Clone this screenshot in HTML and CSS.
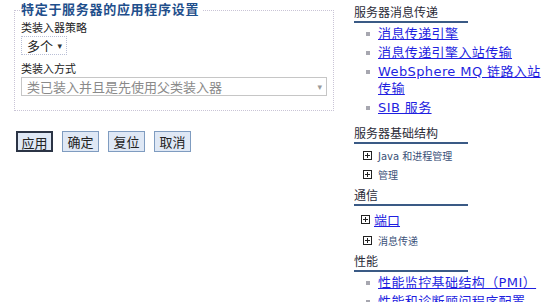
FILE: index.html
```html
<!DOCTYPE html>
<html lang="zh-CN">
<head>
    <meta charset="UTF-8">
    <title>应用程序服务器设置</title>
    <link rel="stylesheet" href="styles.css">
</head>
<body>
    <div class="page">
        <div class="main">
            <fieldset class="settings">
                <legend>特定于服务器的应用程序设置</legend>

                <div class="field-label">类装入器策略</div>
                <div class="select short">
                    <span>多个</span>
                    <span class="arrow">&#9662;</span>
                </div>

                <div class="field-label second">类装入方式</div>
                <div class="select wide disabled">
                    <span>类已装入并且是先使用父类装入器</span>
                    <span class="arrow">&#9662;</span>
                </div>
            </fieldset>

            <div class="buttons">
                <button class="btn default">应用</button>
                <button class="btn">确定</button>
                <button class="btn">复位</button>
                <button class="btn">取消</button>
            </div>
        </div>

        <div class="side">
            <div class="side-section">
                <div class="side-title">服务器消息传递</div>
                <ul class="link-list">
                    <li><a href="#">消息传递引擎</a></li>
                    <li><a href="#">消息传递引擎入站传输</a></li>
                    <li><a href="#">WebSphere MQ 链路入站传输</a></li>
                    <li><a href="#">SIB 服务</a></li>
                </ul>
            </div>

            <div class="side-section">
                <div class="side-title">服务器基础结构</div>
                <ul class="tree-list">
                    <li><span class="plus"></span><span class="tree-text">Java 和进程管理</span></li>
                    <li><span class="plus"></span><span class="tree-text">管理</span></li>
                </ul>
            </div>

            <div class="side-section">
                <div class="side-title">通信</div>
                <ul class="tree-list">
                    <li class="tree-link"><span class="plus"></span><a href="#">端口</a></li>
                    <li><span class="plus"></span><span class="tree-text">消息传递</span></li>
                </ul>
            </div>

            <div class="side-section">
                <div class="side-title">性能</div>
                <ul class="link-list">
                    <li><a href="#">性能监控基础结构（PMI）</a></li>
                    <li><a href="#">性能和诊断顾问程序配置</a></li>
                </ul>
            </div>
        </div>
    </div>
</body>
</html>
```

FILE: styles.css
```css
body {
    margin: 0;
    background: #fff;
    font-family: "DejaVu Sans", "Noto Sans CJK SC", sans-serif;
    color: #222;
    overflow: hidden;
}

.page {
    display: flex;
    height: 302px;
}

.main {
    width: 340px;
    padding-left: 14px;
}

.settings {
    width: 305px;
    margin: 2px 0 0 0;
    padding: 0 6px 14px 6px;
    border: 1px dotted #c9c4d6;
}

.settings legend {
    padding: 0 3px 0 1px;
    margin-left: -1px;
    font-size: 13px;
    line-height: 16px;
    font-weight: bold;
    letter-spacing: 0.7px;
    color: #1f4f8c;
}

.field-label {
    margin-top: 4px;
    font-size: 11px;
    line-height: 14px;
    color: #222;
}

.field-label.second {
    margin-top: 8px;
}

.select {
    display: flex;
    align-items: center;
    justify-content: space-between;
    box-sizing: border-box;
    height: 19px;
    padding: 0 4px 0 5px;
    border: 1px dotted #b9bfd6;
    font-size: 13px;
    color: #222;
}

.select.short {
    width: 46px;
}

.select.wide {
    width: 306px;
}

.select.disabled {
    border: 1px solid #c6c6c6;
    color: #8a8a8a;
}

.arrow {
    font-size: 9px;
    color: #333;
}

.disabled .arrow {
    color: #9a9a9a;
}

.buttons {
    display: flex;
    gap: 9px;
    margin-top: 20px;
    padding-left: 2px;
}

.btn {
    width: 37px;
    height: 21px;
    padding: 0;
    border: 1px solid #7f9cc0;
    background: #dfe8f5;
    font-family: "DejaVu Sans", "Noto Sans CJK SC", sans-serif;
    font-size: 13px;
    color: #222;
}

.btn.default {
    border: 2px solid #2b3445;
}

.side {
    flex: 1;
    min-width: 0;
}

.side-section {
    margin-bottom: 11px;
}

.side-title {
    width: 114px;
    padding-top: 6px;
    font-size: 12px;
    line-height: 15px;
    color: #2b2b38;
    border-bottom: 2px solid #3a5a85;
}

.side-section + .side-section .side-title {
    padding-top: 0;
}

ul {
    list-style: none;
    margin: 0;
    padding: 0;
}

.link-list li {
    position: relative;
    margin-top: 2px;
    padding-left: 24px;
    font-size: 13px;
    line-height: 17px;
    letter-spacing: 0.4px;
}

.link-list li::before {
    content: "";
    position: absolute;
    left: 12px;
    top: 7px;
    width: 4px;
    height: 4px;
    background: #a7a7b0;
}

.link-list a {
    color: #1f1fe0;
}

.tree-list {
    padding-top: 2px;
}

.tree-list li {
    display: flex;
    align-items: center;
    gap: 6px;
    padding-left: 9px;
    height: 19px;
}

.plus {
    position: relative;
    width: 7px;
    height: 7px;
    border: 1px solid #222;
    flex-shrink: 0;
}

.plus::before,
.plus::after {
    content: "";
    position: absolute;
    background: #222;
}

.plus::before {
    left: 1px;
    top: 3px;
    width: 5px;
    height: 1px;
}

.plus::after {
    left: 3px;
    top: 1px;
    width: 1px;
    height: 5px;
}

.tree-text {
    font-size: 10px;
    color: #3a5078;
}

.tree-list .tree-link {
    height: 23px;
    padding-left: 7px;
    gap: 4px;
}

.tree-link a {
    font-size: 13px;
    color: #1f1fe0;
}

.tree-list + .tree-list,
.side-section:has(.tree-list) {
    margin-bottom: 5px;
}
```
